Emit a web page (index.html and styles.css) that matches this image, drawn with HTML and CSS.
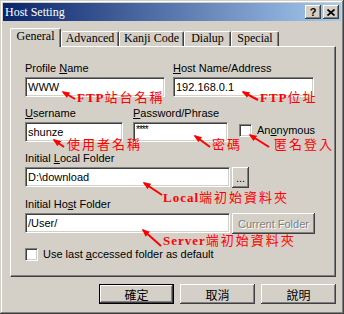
FILE: index.html
```html
<!DOCTYPE html>
<html lang="zh-Hant">
<head>
    <meta charset="UTF-8">
    <meta name="viewport" content="width=device-width, initial-scale=1.0">
    <title>Host Setting</title>
    <link rel="stylesheet" href="styles.css">
</head>
<body>
    <div class="window">
        <div class="titlebar">
            <span class="title">Host Setting</span>
            <div class="title-btns">
                <div class="tbtn">?</div>
                <div class="tbtn">
                    <svg width="8" height="7" viewBox="0 0 8 7"><path d="M0.5 0.5 L7.5 6.5 M7.5 0.5 L0.5 6.5" stroke="#000" stroke-width="1.7"/></svg>
                </div>
            </div>
        </div>

        <div class="tabs">
            <div class="tab active t-general">General</div>
            <div class="tab t-advanced">Advanced</div>
            <div class="tab t-kanji">Kanji Code</div>
            <div class="tab t-dialup">Dialup</div>
            <div class="tab t-special">Special</div>
        </div>

        <div class="panel">
            <div class="row">
                <div class="field w-profile">
                    <label>Profile <u>N</u>ame</label>
                    <div class="input">WWW</div>
                </div>
                <div class="field w-host">
                    <label><u>H</u>ost Name/Address</label>
                    <div class="input">192.168.0.1</div>
                </div>
            </div>

            <div class="row">
                <div class="field w-user">
                    <label><u>U</u>sername</label>
                    <div class="input">shunze</div>
                </div>
                <div class="field w-pass">
                    <label><u>P</u>assword/Phrase</label>
                    <div class="input pass">****</div>
                </div>
                <div class="check anon">
                    <span class="box"></span>
                    <span>An<u>o</u>nymous</span>
                </div>
            </div>

            <div class="row">
                <div class="field">
                    <label>Initial <u>L</u>ocal Folder</label>
                    <div class="line">
                        <div class="input w-folder">D:\download</div>
                        <div class="btn small">...</div>
                    </div>
                </div>
            </div>

            <div class="row">
                <div class="field">
                    <label>Initial Ho<u>s</u>t Folder</label>
                    <div class="line">
                        <div class="input w-folder">/User/</div>
                        <div class="btn current">Current Folder</div>
                    </div>
                </div>
            </div>

            <div class="check last">
                <span class="box"></span>
                <span>Use last <u>a</u>ccessed folder as default</span>
            </div>
        </div>

        <div class="buttons">
            <div class="btn dlg default">確定</div>
            <div class="btn dlg">取消</div>
            <div class="btn dlg">說明</div>
        </div>

        <!-- red annotations drawn over the dialog -->
        <div class="notes">
            <svg width="344" height="314" viewBox="0 0 344 314">
                <defs>
                    <marker id="ah" markerUnits="userSpaceOnUse" viewBox="0 0 10 10" refX="8" refY="5" markerWidth="8" markerHeight="8" orient="auto">
                        <path d="M0,1 L10,5 L0,9 z" fill="#f00"/>
                    </marker>
                </defs>
                <g stroke="#f00" stroke-width="2" marker-end="url(#ah)">
                    <line x1="75" y1="99" x2="63" y2="92"/>
                    <line x1="258" y1="100" x2="243" y2="92"/>
                    <line x1="64" y1="147" x2="54" y2="140"/>
                    <line x1="210" y1="147" x2="195" y2="136"/>
                    <line x1="269" y1="147" x2="250" y2="135"/>
                    <line x1="162" y1="195" x2="144" y2="183"/>
                    <line x1="161" y1="246" x2="143" y2="230"/>
                </g>
            </svg>
            <span class="note n1"><span class="lat">FTP</span>站台名稱</span>
            <span class="note n2"><span class="lat">FTP</span>位址</span>
            <span class="note n3">使用者名稱</span>
            <span class="note n4">密碼</span>
            <span class="note n5">匿名登入</span>
            <span class="note n6"><span class="lat">Local</span>端初始資料夾</span>
            <span class="note n7"><span class="lat">Server</span>端初始資料夾</span>
        </div>
    </div>
</body>
</html>
```

FILE: styles.css
```css
* {
    box-sizing: border-box;
}
body {
    margin: 0;
    font-family: "Liberation Sans", Arial, sans-serif;
    font-size: 11px;
    color: #000;
    background: #d4d0c8;
}
u {
    text-decoration: underline;
    text-underline-offset: 1px;
}
.window {
    position: relative;
    width: 344px;
    height: 314px;
    padding: 3px;
    background: #d4d0c8;
    box-shadow: inset -1px -1px #404040, inset 1px 1px #d4d0c8, inset -2px -2px #808080, inset 2px 2px #fff;
}

/* title bar */
.titlebar {
    display: flex;
    align-items: center;
    justify-content: space-between;
    height: 18px;
    padding: 0 2px 0 2px;
    background: linear-gradient(to right, #0a246a, #a6caf0);
}
.title {
    color: #fff;
    font: 12px/14px "Liberation Serif", serif;
}
.title-btns {
    display: flex;
    gap: 2px;
}
.tbtn {
    display: flex;
    align-items: center;
    justify-content: center;
    width: 16px;
    height: 14px;
    font-weight: bold;
    font-size: 11px;
    background: #d4d0c8;
    box-shadow: inset -1px -1px #404040, inset 1px 1px #fff, inset -2px -2px #808080;
}

/* tabs */
.tabs {
    display: flex;
    align-items: flex-end;
    height: 18px;
    margin: 7px 0 0 7px;
}
.tab {
    height: 15px;
    text-align: center;
    font: 12px/13px "Liberation Serif", serif;
    border: 1px solid;
    border-color: #fff #404040 transparent #fff;
    border-bottom: none;
    border-radius: 2px 2px 0 0;
    box-shadow: inset -1px 0 #808080;
}
.tab.active {
    position: relative;
    z-index: 1;
    height: 19px;
    margin-bottom: -1px;
    padding-top: 1px;
    background: #d4d0c8;
}
.t-general { width: 51px; }
.t-advanced { width: 58px; }
.t-kanji { width: 65px; }
.t-dialup { width: 47px; }
.t-special { width: 48px; }

/* panel */
.panel {
    width: 326px;
    margin-left: 7px;
    padding: 15px 14px 15px 14px;
    border: 1px solid;
    border-color: #fff #404040 #404040 #fff;
    box-shadow: inset -1px -1px #808080;
}
.row {
    display: flex;
    align-items: flex-end;
}
.row + .row {
    margin-top: 10px;
}
.field label {
    display: block;
    line-height: 13px;
    margin-bottom: 2px;
}
.input {
    height: 20px;
    padding-left: 2px;
    line-height: 18px;
    white-space: nowrap;
    background: #fff;
    border: 1px solid;
    border-color: #808080 #fff #fff #808080;
    box-shadow: inset 1px 1px #404040, inset -1px -1px #d4d0c8;
}
.input.pass {
    font-size: 10px;
    letter-spacing: -1px;
    line-height: 14px;
}
.w-profile { width: 140px; margin-right: 8px; }
.w-host { width: 141px; }
.w-user { width: 98px; margin-right: 10px; }
.w-pass { width: 95px; margin-right: 11px; }
.w-folder { width: 205px; }
.line {
    display: flex;
    align-items: flex-start;
    gap: 2px;
}

/* checkboxes */
.check {
    display: flex;
    align-items: center;
    gap: 5px;
    line-height: 13px;
}
.check .box {
    width: 13px;
    height: 13px;
    background: #fff;
    border: 1px solid;
    border-color: #808080 #fff #fff #808080;
    box-shadow: inset 1px 1px #404040, inset -1px -1px #d4d0c8;
}
.check.anon {
    margin-bottom: 5px;
}
.check.last {
    margin-top: 14px;
}

/* buttons */
.btn {
    display: flex;
    align-items: center;
    justify-content: center;
    background: #d4d0c8;
    box-shadow: inset -1px -1px #404040, inset 1px 1px #fff, inset -2px -2px #808080;
}
.btn.small {
    width: 17px;
    height: 21px;
}
.btn.current {
    width: 83px;
    height: 21px;
    color: #808080;
    text-shadow: 1px 1px #fff;
}
.buttons {
    display: flex;
    justify-content: flex-end;
    gap: 6px;
    margin: 7px 5px 0 0;
}
.btn.dlg {
    width: 75px;
    height: 20px;
    font: 12px "Noto Sans CJK TC", sans-serif;
}
.btn.default {
    border: 1px solid #000;
}

/* annotations */
.notes {
    position: absolute;
    top: 0;
    left: 0;
    width: 344px;
    height: 314px;
    pointer-events: none;
}
.notes svg {
    position: absolute;
    top: 0;
    left: 0;
}
.note {
    position: absolute;
    color: #f00;
    font: 13px/13px "Liberation Serif", "Noto Sans CJK TC", serif;
    letter-spacing: 2px;
    white-space: nowrap;
}
.note .lat {
    font-weight: bold;
    letter-spacing: 1px;
}
.n1 { left: 77px; top: 91px; }
.n2 { left: 260px; top: 91px; }
.n3 { left: 67px; top: 138px; }
.n4 { left: 212px; top: 138px; }
.n5 { left: 274px; top: 138px; }
.n6 { left: 163px; top: 191px; }
.n7 { left: 163px; top: 234px; }
```
